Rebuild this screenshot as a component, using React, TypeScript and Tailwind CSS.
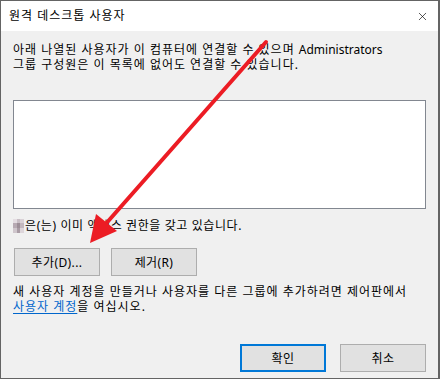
import { X } from "lucide-react"

const blur = ["#e4dde2", "#c9bfc6", "#d9d1d6", "#b7aab3", "#9d8f98", "#c2b7be", "#cfc6cc", "#a99ca5", "#ddd5da"]

function Button({ label, primary }: { label: string; primary?: boolean }) {
  return (
    <button
      className={
        "w-[86px] h-[28px] bg-[#e1e1e1] text-[12px] tracking-[0.4px] text-black flex items-center justify-center " +
        (primary ? "border-2 border-[#0078d7]" : "border border-[#adadad]")
      }
    >
      {label}
    </button>
  )
}

export default function App() {
  return (
    <div className="relative w-[440px] h-[379px] border-t border-l border-b border-r-2 border-[#646464] bg-[#f0f0f0] flex flex-col font-['Noto_Sans','Noto_Sans_CJK_KR',sans-serif] text-black">
      <div className="h-[30px] bg-white flex items-center justify-between pl-2 pr-[9px] shrink-0">
        <span className="text-[12px] tracking-[1px]">원격 데스크톱 사용자</span>
        <X size={13} strokeWidth={1.2} className="text-black" />
      </div>

      <div className="flex flex-col px-3 text-[12px] leading-[15px]">
        <p className="mt-[11px] tracking-[1px]">
          아래 나열된 사용자가 이 컴퓨터에 연결할 수 있으며 <span className="tracking-normal">Administrators</span>
          <br />
          그룹 구성원은 이 목록에 없어도 연결할 수 있습니다.
        </p>

        <div className="mt-[28px] h-[109px] bg-white border border-[#828790]" />

        <div className="mt-[9px] flex items-center tracking-[0.6px]">
          <div className="grid grid-cols-3 w-[11px] h-[14px] mr-px">
            {blur.map((c, i) => (
              <div key={i} style={{ backgroundColor: c }} />
            ))}
          </div>
          <span>은(는) 이미 액세스 권한을 갖고 있습니다.</span>
        </div>

        <div className="mt-[15px] flex gap-[11px] pl-px">
          <Button label="추가(D)..." />
          <Button label="제거(R)" />
        </div>

        <p className="mt-[8px] tracking-[1px]">
          새 사용자 계정을 만들거나 사용자를 다른 그룹에 추가하려면 제어판에서
          <br />
          <span className="text-[#0066cc] underline underline-offset-2">사용자 계정</span>을 여십시오.
        </p>

        <div className="mt-[30px] flex justify-end gap-[14px]">
          <Button label="확인" primary />
          <Button label="취소" />
        </div>
      </div>

      <svg className="absolute left-[-1px] top-[-1px] pointer-events-none" width="440" height="379">
        <line x1="266" y1="42" x2="103" y2="227" stroke="#ec1c24" strokeWidth="4" strokeLinecap="round" />
        <polygon points="90,243 96,214 117,231" fill="#ec1c24" />
      </svg>
    </div>
  )
}
